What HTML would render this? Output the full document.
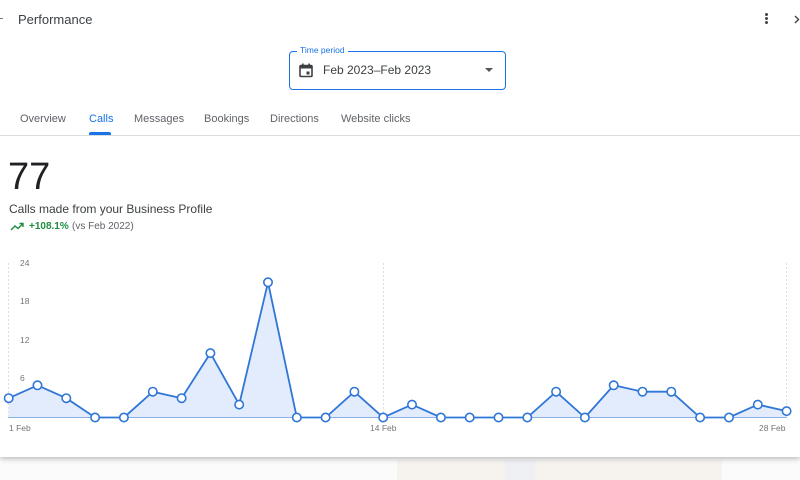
<!DOCTYPE html>
<html><head><meta charset="utf-8"><style>
*{margin:0;padding:0;box-sizing:border-box}
body{width:800px;height:480px;overflow:hidden;background:#fbfbfb;font-family:"Liberation Sans",Roboto,sans-serif;position:relative}
.card{position:absolute;left:0;top:0;width:800px;height:457px;background:#fff;box-shadow:0 2px 5px rgba(0,0,0,.25)}
.abs{position:absolute;white-space:nowrap}
.tab{position:absolute;top:113px;font-size:11px;color:#5f6368}
</style></head><body>
<div class="abs" style="left:397px;top:460px;width:325px;height:20px;background:#f6f3ef"></div>
<div class="abs" style="left:505px;top:460px;width:30px;height:20px;background:#eef0f3"></div>
<div class="card">
<div class="abs" style="left:0;top:18px;width:3px;height:1px;background:#777"></div>
<div class="abs" style="left:18px;top:12px;font-size:13px;color:#3c4043">Performance</div>
<div class="abs" style="left:765px;top:13px;width:3px;height:3px;background:#444;border-radius:50%;box-shadow:0 4px 0 #444,0 8px 0 #444"></div>
<svg class="abs" style="left:794px;top:15px" width="6" height="9"><path d="M1 1L4.5 4.5L1 8" stroke="#444" stroke-width="1.4" fill="none"/></svg>
<div class="abs" style="left:289px;top:51px;width:217px;height:39px;border:1.5px solid #1a73e8;border-radius:4px"></div>
<div class="abs" style="left:297px;top:45px;font-size:8.5px;color:#1a73e8;background:#fff;padding:0 3px">Time period</div>
<svg class="abs" style="left:299px;top:63px" width="14" height="15" viewBox="0 0 14 15"><rect x="1" y="2.5" width="12" height="11" rx="1" fill="none" stroke="#3c4043" stroke-width="1.6"/><rect x="1" y="2.5" width="12" height="3" fill="#3c4043"/><rect x="3" y="0.5" width="1.6" height="3" fill="#3c4043"/><rect x="9.4" y="0.5" width="1.6" height="3" fill="#3c4043"/><rect x="7.5" y="8.5" width="3" height="3" fill="#3c4043"/></svg>
<div class="abs" style="left:323px;top:63px;font-size:12px;color:#3c4043">Feb 2023–Feb 2023</div>
<div class="abs" style="left:485px;top:68px;border-left:4px solid transparent;border-right:4px solid transparent;border-top:4px solid #555"></div>
<div class="tab" style="left:20px">Overview</div>
<div class="tab" style="left:89px;color:#1a73e8">Calls</div>
<div class="abs" style="left:89px;top:132px;width:22px;height:3px;background:#1a73e8;border-radius:2px 2px 0 0"></div>
<div class="tab" style="left:134px">Messages</div>
<div class="tab" style="left:204px">Bookings</div>
<div class="tab" style="left:270px">Directions</div>
<div class="tab" style="left:341px">Website clicks</div>
<div class="abs" style="left:0;top:135px;width:800px;height:1px;background:#dadce0"></div>
<div class="abs" style="left:8px;top:155px;font-size:38px;color:#202124;line-height:44px">77</div>
<div class="abs" style="left:9px;top:202px;font-size:12px;color:#3c4043">Calls made from your Business Profile</div>
<svg class="abs" style="left:10px;top:222px" width="14" height="9"><path d="M1 8L5 4L8 6.5L12.5 2M9.5 1.5H13V5" stroke="#1e8e3e" stroke-width="1.4" fill="none"/></svg>
<div class="abs" style="left:29px;top:221px;font-size:10px;color:#1e8e3e;font-weight:bold">+108.1%</div>
<div class="abs" style="left:72px;top:221px;font-size:10px;color:#5f6368">(vs Feb 2022)</div>
<svg class="abs" style="left:0;top:0" width="800" height="457">
<g stroke="#ddd" stroke-dasharray="2,2" stroke-width="1"><line x1="8.5" y1="263" x2="8.5" y2="417"/><line x1="383.5" y1="263" x2="383.5" y2="417"/><line x1="786.5" y1="263" x2="786.5" y2="417"/></g>
<g font-family="Liberation Sans,sans-serif" font-size="8.5" fill="#757575"><text x="20" y="266">24</text><text x="20" y="304">18</text><text x="20" y="343">12</text><text x="20" y="381">6</text><text x="9" y="431">1 Feb</text><text x="370" y="431">14 Feb</text><text x="759" y="431">28 Feb</text></g>
<polygon fill="#e3ecfc" points="8.7,417.5 8.7,398.2 37.5,385.3 66.3,398.2 95.1,417.5 123.9,417.5 152.8,391.7 181.6,398.2 210.4,353.1 239.2,404.6 268,282.3 296.8,417.5 325.6,417.5 354.4,391.7 383.2,417.5 412,404.6 440.9,417.5 469.7,417.5 498.5,417.5 527.3,417.5 556.1,391.7 584.9,417.5 613.7,385.3 642.5,391.7 671.3,391.7 700.1,417.5 729,417.5 757.8,404.6 786.6,411.1 786.6,417.5"/>
<line x1="8" y1="417.5" x2="787" y2="417.5" stroke="#8ab0e8" stroke-width="1"/>
<polyline fill="none" stroke="#2f76d6" stroke-width="1.8" points="8.7,398.2 37.5,385.3 66.3,398.2 95.1,417.5 123.9,417.5 152.8,391.7 181.6,398.2 210.4,353.1 239.2,404.6 268,282.3 296.8,417.5 325.6,417.5 354.4,391.7 383.2,417.5 412,404.6 440.9,417.5 469.7,417.5 498.5,417.5 527.3,417.5 556.1,391.7 584.9,417.5 613.7,385.3 642.5,391.7 671.3,391.7 700.1,417.5 729,417.5 757.8,404.6 786.6,411.1"/>
<g fill="#fff" stroke="#2f76d6" stroke-width="1.6">
<circle cx="8.7" cy="398.2" r="4.2"/><circle cx="37.5" cy="385.3" r="4.2"/><circle cx="66.3" cy="398.2" r="4.2"/><circle cx="95.1" cy="417.5" r="4.2"/><circle cx="123.9" cy="417.5" r="4.2"/><circle cx="152.8" cy="391.7" r="4.2"/><circle cx="181.6" cy="398.2" r="4.2"/><circle cx="210.4" cy="353.1" r="4.2"/><circle cx="239.2" cy="404.6" r="4.2"/><circle cx="268" cy="282.3" r="4.2"/><circle cx="296.8" cy="417.5" r="4.2"/><circle cx="325.6" cy="417.5" r="4.2"/><circle cx="354.4" cy="391.7" r="4.2"/><circle cx="383.2" cy="417.5" r="4.2"/><circle cx="412" cy="404.6" r="4.2"/><circle cx="440.9" cy="417.5" r="4.2"/><circle cx="469.7" cy="417.5" r="4.2"/><circle cx="498.5" cy="417.5" r="4.2"/><circle cx="527.3" cy="417.5" r="4.2"/><circle cx="556.1" cy="391.7" r="4.2"/><circle cx="584.9" cy="417.5" r="4.2"/><circle cx="613.7" cy="385.3" r="4.2"/><circle cx="642.5" cy="391.7" r="4.2"/><circle cx="671.3" cy="391.7" r="4.2"/><circle cx="700.1" cy="417.5" r="4.2"/><circle cx="729" cy="417.5" r="4.2"/><circle cx="757.8" cy="404.6" r="4.2"/><circle cx="786.6" cy="411.1" r="4.2"/>
</g>
</svg>
</div>
</body></html>
